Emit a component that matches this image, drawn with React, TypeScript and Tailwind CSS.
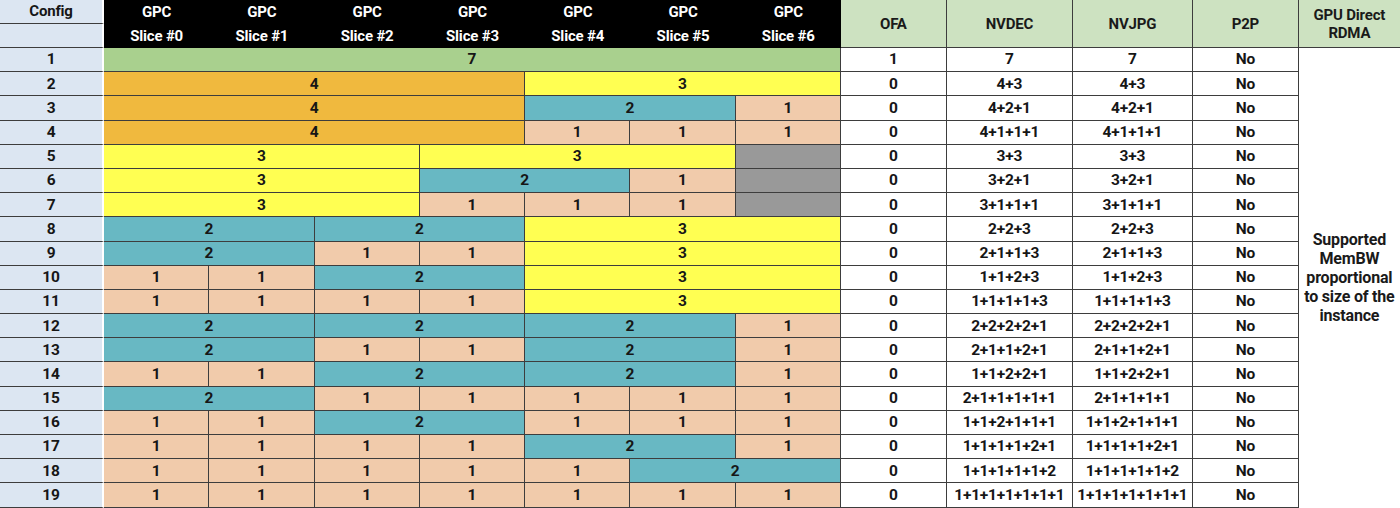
import React from "react";

type Seg = [number, string]; // [span, colorKey]

const COLOR: Record<string, string> = {
  g: "bg-[#a9d08e]",
  o: "bg-[#f0b93e]",
  y: "bg-[#ffff52]",
  t: "bg-[#68b8c3]",
  p: "bg-[#f1cbab]",
  x: "bg-[#999999]",
};

const SPAN: Record<number, string> = {
  1: "col-span-1",
  2: "col-span-2",
  3: "col-span-3",
  4: "col-span-4",
  7: "col-span-7",
};

const slices: Seg[][] = [
  [[7, "g"]],
  [[4, "o"], [3, "y"]],
  [[4, "o"], [2, "t"], [1, "p"]],
  [[4, "o"], [1, "p"], [1, "p"], [1, "p"]],
  [[3, "y"], [3, "y"], [1, "x"]],
  [[3, "y"], [2, "t"], [1, "p"], [1, "x"]],
  [[3, "y"], [1, "p"], [1, "p"], [1, "p"], [1, "x"]],
  [[2, "t"], [2, "t"], [3, "y"]],
  [[2, "t"], [1, "p"], [1, "p"], [3, "y"]],
  [[1, "p"], [1, "p"], [2, "t"], [3, "y"]],
  [[1, "p"], [1, "p"], [1, "p"], [1, "p"], [3, "y"]],
  [[2, "t"], [2, "t"], [2, "t"], [1, "p"]],
  [[2, "t"], [1, "p"], [1, "p"], [2, "t"], [1, "p"]],
  [[1, "p"], [1, "p"], [2, "t"], [2, "t"], [1, "p"]],
  [[2, "t"], [1, "p"], [1, "p"], [1, "p"], [1, "p"], [1, "p"]],
  [[1, "p"], [1, "p"], [2, "t"], [1, "p"], [1, "p"], [1, "p"]],
  [[1, "p"], [1, "p"], [1, "p"], [1, "p"], [2, "t"], [1, "p"]],
  [[1, "p"], [1, "p"], [1, "p"], [1, "p"], [1, "p"], [2, "t"]],
  [[1, "p"], [1, "p"], [1, "p"], [1, "p"], [1, "p"], [1, "p"], [1, "p"]],
];

const right: [string, string, string][] = [
  ["1", "7", "7"],
  ["0", "4+3", "4+3"],
  ["0", "4+2+1", "4+2+1"],
  ["0", "4+1+1+1", "4+1+1+1"],
  ["0", "3+3", "3+3"],
  ["0", "3+2+1", "3+2+1"],
  ["0", "3+1+1+1", "3+1+1+1"],
  ["0", "2+2+3", "2+2+3"],
  ["0", "2+1+1+3", "2+1+1+3"],
  ["0", "1+1+2+3", "1+1+2+3"],
  ["0", "1+1+1+1+3", "1+1+1+1+3"],
  ["0", "2+2+2+2+1", "2+2+2+2+1"],
  ["0", "2+1+1+2+1", "2+1+1+2+1"],
  ["0", "1+1+2+2+1", "1+1+2+2+1"],
  ["0", "2+1+1+1+1+1", "2+1+1+1+1"],
  ["0", "1+1+2+1+1+1", "1+1+2+1+1+1"],
  ["0", "1+1+1+1+2+1", "1+1+1+1+2+1"],
  ["0", "1+1+1+1+1+2", "1+1+1+1+1+2"],
  ["0", "1+1+1+1+1+1+1", "1+1+1+1+1+1+1"],
];

const cell = "flex items-center justify-center pt-px border-r border-b border-[#3d3d3d]";
const greenHead =
  "row-span-2 flex items-center justify-center text-center bg-[#cde2c1] border-r border-b border-[#3d3d3d] text-[15px] leading-[18px] text-[#1a1a1a]";

export default function App() {
  return (
    <div className="w-[1400px] h-[508px] bg-white overflow-hidden font-[Roboto,sans-serif] font-bold text-[15.5px] text-[#161616] tracking-[-0.2px]">
      <div className="grid grid-cols-[104px_repeat(7,105.28px)_106px_126px_120px_106px_101px] grid-rows-[24px_24px_repeat(19,24.2px)]">
        {/* Header */}
        <div className="flex items-center justify-center bg-[#dce6f2] border-r-2 border-r-white border-b border-b-[#3d3d3d] text-[15px]">
          Config
        </div>
        {Array.from({ length: 7 }).map((_, i) => (
          <div
            key={"h" + i}
            className="row-span-2 flex flex-col items-center bg-black text-white text-[15px] leading-[24px]"
          >
            <span>GPC</span>
            <span>Slice #{i}</span>
          </div>
        ))}
        <div className={greenHead}>OFA</div>
        <div className={greenHead}>NVDEC</div>
        <div className={greenHead}>NVJPG</div>
        <div className={greenHead}>P2P</div>
        <div className="row-span-2 flex items-center justify-center text-center bg-[#cde2c1] border-b border-[#3d3d3d] text-[15px] leading-[18px] text-[#1a1a1a]">
          GPU Direct
          <br />
          RDMA
        </div>
        <div className="bg-[#dce6f2] border-r-2 border-r-white border-b border-b-[#3d3d3d]" />

        {/* Rows */}
        {slices.map((segs, r) => (
          <React.Fragment key={"r" + r}>
            <div className="flex items-center justify-center pt-px bg-[#dce6f2] border-r-2 border-r-white border-b border-b-[#3d3d3d]">
              {r + 1}
            </div>
            {segs.map(([span, c], k) => (
              <div key={k} className={`${cell} ${SPAN[span]} ${COLOR[c]}`}>
                {c === "x" ? "" : c === "g" ? "7" : String(span)}
              </div>
            ))}
            <div className={`${cell} bg-white`}>{right[r][0]}</div>
            <div className={`${cell} bg-white`}>{right[r][1]}</div>
            <div className={`${cell} bg-white`}>{right[r][2]}</div>
            <div className={`${cell} bg-white`}>No</div>
            {r === 0 && (
              <div className="row-span-19 flex items-center justify-center text-center bg-white leading-[19px] text-[16px] text-[#1a1a1a]">
                <span>
                  Supported
                  <br />
                  MemBW
                  <br />
                  proportional
                  <br />
                  to size of the
                  <br />
                  instance
                </span>
              </div>
            )}
          </React.Fragment>
        ))}
      </div>
    </div>
  );
}
